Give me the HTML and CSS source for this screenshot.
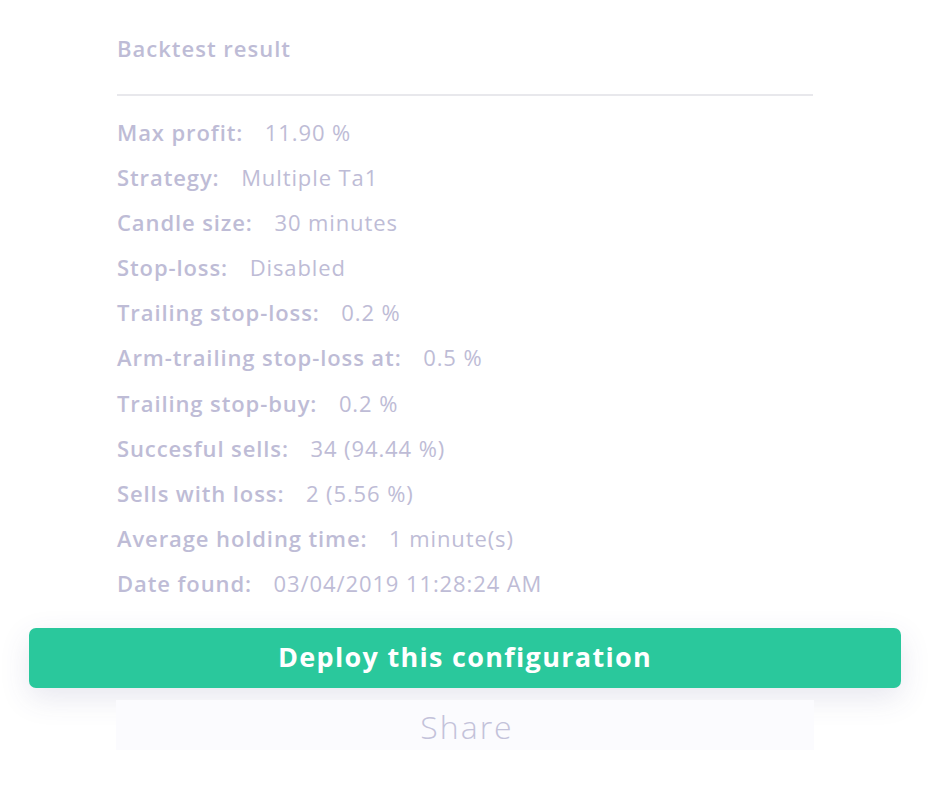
FILE: index.html
```html
<!DOCTYPE html>
<html lang="en">
<head>
  <meta charset="UTF-8" />
  <title>Backtest result</title>
  <link rel="stylesheet" href="styles.css">
</head>
<body>
  <div class="result">
    <div class="panel">
      <h2>Backtest result</h2>
      <ul class="stats">
        <li><strong>Max profit:</strong> 11.90 %</li>
        <li><strong>Strategy:</strong> Multiple Ta1</li>
        <li><strong>Candle size:</strong> 30 minutes</li>
        <li><strong>Stop-loss:</strong> Disabled</li>
        <li><strong>Trailing stop-loss:</strong> 0.2 %</li>
        <li><strong>Arm-trailing stop-loss at:</strong> 0.5 %</li>
        <li><strong>Trailing stop-buy:</strong> 0.2 %</li>
        <li><strong>Succesful sells:</strong> 34 (94.44 %)</li>
        <li><strong>Sells with loss:</strong> 2 (5.56 %)</li>
        <li><strong>Average holding time:</strong> 1 minute(s)</li>
        <li><strong>Date found:</strong> 03/04/2019 11:28:24 AM</li>
      </ul>
    </div>
    <button class="deploy">Deploy this configuration</button>
    <div class="share">Share</div>
  </div>
</body>
</html>
```

FILE: styles.css
```css
body {
  margin: 0;
  background: #ffffff;
  font-family: 'Open Sans', sans-serif;
  color: #bebcd6;
}

.result {
  width: 872px;
  margin-left: 29px;
}

.panel {
  padding: 36px 88px 0;
}

h2 {
  margin: 0;
  font-size: 22px;
  line-height: 24px;
  font-weight: 600;
  letter-spacing: 1px;
  padding-bottom: 34px;
  border-bottom: 2px solid #e8e8ec;
}

.stats {
  list-style: none;
  margin: 14px 0 0;
  padding: 0;
}

.stats li {
  font-size: 22px;
  line-height: 45.1px;
  letter-spacing: 0.9px;
  white-space: nowrap;
}

.stats strong {
  font-weight: 600;
  margin-right: 15px;
}

.deploy {
  display: block;
  width: 100%;
  height: 60px;
  margin-top: 22px;
  padding: 0 0 4px;
  border: none;
  border-radius: 7px;
  background: #2ac89c;
  color: #ffffff;
  font-family: 'Open Sans', sans-serif;
  font-size: 27px;
  font-weight: 700;
  letter-spacing: 1.3px;
  box-shadow: 0 10px 30px rgba(70, 70, 130, 0.13);
  cursor: pointer;
}

.share {
  margin: 12px 87px 0 87px;
  height: 50px;
  background: #fbfbfe;
  text-align: center;
  font-size: 32px;
  line-height: 32px;
  padding-top: 11px;
  padding-left: 4px;
  box-sizing: border-box;
  font-weight: 300;
  letter-spacing: 2px;
  color: #c3c2da;
}
```
